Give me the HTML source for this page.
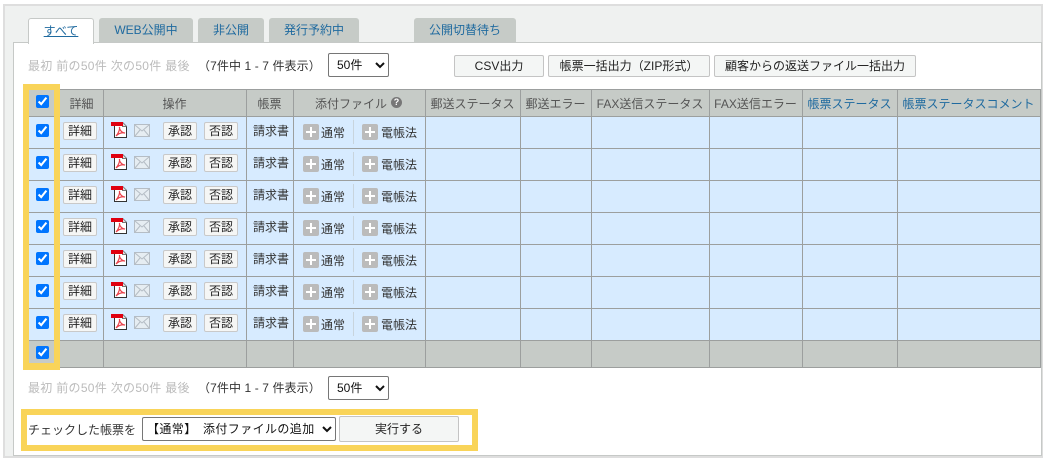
<!DOCTYPE html>
<html lang="ja"><head><meta charset="utf-8"><title>帳票</title>
<style>
html,body{margin:0;padding:0;width:1047px;height:462px;overflow:hidden;background:#fff}
body{position:relative;font:12px/16px "Liberation Sans","Noto Sans CJK JP",sans-serif;color:#333}
.a,.t,.b,.l,.r,.r *{position:absolute}
.a{white-space:nowrap}
#outer{left:3px;top:4px;width:1036px;height:450px;background:#eff1f0;border:2px solid #dedede}
#panel{left:13px;top:42px;width:1027px;height:412px;background:#fff;border:1px solid #c6c9c7}
.t{top:18px;height:24px;background:#c6cbc7;border-radius:3px 3px 0 0;text-align:center;line-height:24px;color:#1f6a9f;white-space:nowrap}
.b{background:#f4f6f5;border:1px solid #c4c4c4;border-radius:2px;box-sizing:border-box;text-align:center;color:#222;white-space:nowrap}
select{position:absolute;box-sizing:border-box;background:#fff;border:1px solid #767676;border-radius:2px;font:12px "Liberation Sans","Noto Sans CJK JP",sans-serif;color:#111;margin:0;padding:0 0 0 4px}
input{position:absolute;margin:0;width:13px;height:13px;accent-color:#0075ff}
.l{background:#9c9f9e}
.h{background:#c6cbc7}
.g{color:#bbb;letter-spacing:.3px}
.th{position:absolute;top:96px;text-align:center;color:#555;white-space:nowrap}
.bl{color:#1f6a9f}
.r{left:0;width:1047px;height:32px}
.r .k{left:36px;top:8px}
.r .b{height:18px;line-height:16px;background:#f5f6f5;top:6px;border-color:#c9c9c9}
.r .s{white-space:nowrap;color:#333}
.r svg{display:block}
.p{width:16px;height:16px;top:8px;background:#bbb;border-radius:2px}
.p::before{content:"";position:absolute;left:3px;top:7px;width:10px;height:2px;background:#fff}
.p::after{content:"";position:absolute;left:7px;top:3px;width:2px;height:10px;background:#fff}
.sep{left:353px;top:4px;width:1px;height:24px;background:#c8d4dd}
</style></head><body>
<svg width="0" height="0" style="position:absolute"><defs>
<symbol id="pdf" viewBox="0 0 17 16"><path d="M4.5 .5H12.5L16.5 4.5V15.5H4.5Z" fill="#fff" stroke="#333"/><path d="M12.5 .5V4.5H16.5" fill="#ddd" stroke="#777"/><rect x="1" y="0" width="12" height="4" fill="#e00010"/><path d="M6 14C8.5 11.5 10 7 9.5 5C9 7.5 12 11 15 11C12 10.2 8.5 11.5 6 14Z" fill="none" stroke="#e8404a" stroke-width="1.2"/></symbol>
<symbol id="mail" viewBox="0 0 16 13"><rect x=".5" y=".5" width="15" height="12" fill="#e6edf2" stroke="#b5bdc5"/><path d="M1 1L8 7L15 1M1 12L6 6M15 12L10 6" fill="none" stroke="#b5bdc5"/></symbol>
</defs></svg>

<div class="a" id="outer"></div>
<div class="a" id="panel"></div>

<div class="a" style="left:28px;top:18px;width:64px;height:25px;background:#fff;border:1px solid #c6c9c7;border-bottom:0;border-radius:3px 3px 0 0;text-align:center;line-height:24px;color:#1f6a9f"><span style="text-decoration:underline">すべて</span></div>
<div class="t" style="left:99px;width:94px">WEB公開中</div>
<div class="t" style="left:198px;width:66px">非公開</div>
<div class="t" style="left:269px;width:90px">発行予約中</div>
<div class="t" style="left:414px;width:102px">公開切替待ち</div>

<div class="a g" style="left:28px;top:58px">最初 前の50件 次の50件 最後</div>
<div class="a" style="left:198px;top:58px;letter-spacing:.1px">（7件中 1 - 7 件表示）</div>
<select style="left:328px;top:53px;width:61px;height:24px"><option>50件</option></select>

<div class="b" style="left:454px;top:55px;width:90px;height:22px;line-height:20px">CSV出力</div>
<div class="b" style="left:548px;top:55px;width:162px;height:22px;line-height:20px">帳票一括出力（ZIP形式）</div>
<div class="b" style="left:714px;top:55px;width:202px;height:22px;line-height:20px">顧客からの返送ファイル一括出力</div>

<!-- table -->
<div class="a h" style="left:29px;top:89px;width:1011px;height:27px"></div>
<div class="a" style="left:29px;top:116px;width:1011px;height:224px;background:#d7ebff"></div>
<div class="a h" style="left:29px;top:340px;width:1011px;height:27px"></div>

<div class="a th" style="left:60px;width:43px">詳細</div>
<div class="a th" style="left:103px;width:143px">操作</div>
<div class="a th" style="left:246px;width:47px">帳票</div>
<div class="a th" style="left:315px;top:96px;text-align:left">添付ファイル</div>
<div class="a" style="left:391px;top:97px;width:11px;height:11px;border-radius:50%;background:#777;color:#fff;font-size:9px;line-height:11px;text-align:center;font-weight:bold">?</div>
<div class="a th" style="left:425px;width:95px">郵送ステータス</div>
<div class="a th" style="left:520px;width:71px">郵送エラー</div>
<div class="a th" style="left:591px;width:118px">FAX送信ステータス</div>
<div class="a th" style="left:709px;width:93px">FAX送信エラー</div>
<div class="a th bl" style="left:802px;width:95px">帳票ステータス</div>
<div class="a th bl" style="left:897px;width:143px">帳票ステータスコメント</div>

<div class="r" style="top:116px"><input class="k" type="checkbox" checked><div class="b" style="left:63px;width:34px">詳細</div><svg style="left:110px;top:6px" width="17" height="16"><use href="#pdf"/></svg><svg style="left:134px;top:8px" width="16" height="13"><use href="#mail"/></svg><div class="b" style="left:163px;width:34px">承認</div><div class="b" style="left:204px;width:34px">否認</div><div class="s" style="left:253px;top:7px">請求書</div><div class="p" style="left:303px"></div><div class="s" style="left:321px;top:9px">通常</div><div class="sep"></div><div class="p" style="left:362px"></div><div class="s" style="left:381px;top:9px">電帳法</div></div>
<div class="r" style="top:148px"><input class="k" type="checkbox" checked><div class="b" style="left:63px;width:34px">詳細</div><svg style="left:110px;top:6px" width="17" height="16"><use href="#pdf"/></svg><svg style="left:134px;top:8px" width="16" height="13"><use href="#mail"/></svg><div class="b" style="left:163px;width:34px">承認</div><div class="b" style="left:204px;width:34px">否認</div><div class="s" style="left:253px;top:7px">請求書</div><div class="p" style="left:303px"></div><div class="s" style="left:321px;top:9px">通常</div><div class="sep"></div><div class="p" style="left:362px"></div><div class="s" style="left:381px;top:9px">電帳法</div></div>
<div class="r" style="top:180px"><input class="k" type="checkbox" checked><div class="b" style="left:63px;width:34px">詳細</div><svg style="left:110px;top:6px" width="17" height="16"><use href="#pdf"/></svg><svg style="left:134px;top:8px" width="16" height="13"><use href="#mail"/></svg><div class="b" style="left:163px;width:34px">承認</div><div class="b" style="left:204px;width:34px">否認</div><div class="s" style="left:253px;top:7px">請求書</div><div class="p" style="left:303px"></div><div class="s" style="left:321px;top:9px">通常</div><div class="sep"></div><div class="p" style="left:362px"></div><div class="s" style="left:381px;top:9px">電帳法</div></div>
<div class="r" style="top:212px"><input class="k" type="checkbox" checked><div class="b" style="left:63px;width:34px">詳細</div><svg style="left:110px;top:6px" width="17" height="16"><use href="#pdf"/></svg><svg style="left:134px;top:8px" width="16" height="13"><use href="#mail"/></svg><div class="b" style="left:163px;width:34px">承認</div><div class="b" style="left:204px;width:34px">否認</div><div class="s" style="left:253px;top:7px">請求書</div><div class="p" style="left:303px"></div><div class="s" style="left:321px;top:9px">通常</div><div class="sep"></div><div class="p" style="left:362px"></div><div class="s" style="left:381px;top:9px">電帳法</div></div>
<div class="r" style="top:244px"><input class="k" type="checkbox" checked><div class="b" style="left:63px;width:34px">詳細</div><svg style="left:110px;top:6px" width="17" height="16"><use href="#pdf"/></svg><svg style="left:134px;top:8px" width="16" height="13"><use href="#mail"/></svg><div class="b" style="left:163px;width:34px">承認</div><div class="b" style="left:204px;width:34px">否認</div><div class="s" style="left:253px;top:7px">請求書</div><div class="p" style="left:303px"></div><div class="s" style="left:321px;top:9px">通常</div><div class="sep"></div><div class="p" style="left:362px"></div><div class="s" style="left:381px;top:9px">電帳法</div></div>
<div class="r" style="top:276px"><input class="k" type="checkbox" checked><div class="b" style="left:63px;width:34px">詳細</div><svg style="left:110px;top:6px" width="17" height="16"><use href="#pdf"/></svg><svg style="left:134px;top:8px" width="16" height="13"><use href="#mail"/></svg><div class="b" style="left:163px;width:34px">承認</div><div class="b" style="left:204px;width:34px">否認</div><div class="s" style="left:253px;top:7px">請求書</div><div class="p" style="left:303px"></div><div class="s" style="left:321px;top:9px">通常</div><div class="sep"></div><div class="p" style="left:362px"></div><div class="s" style="left:381px;top:9px">電帳法</div></div>
<div class="r" style="top:308px"><input class="k" type="checkbox" checked><div class="b" style="left:63px;width:34px">詳細</div><svg style="left:110px;top:6px" width="17" height="16"><use href="#pdf"/></svg><svg style="left:134px;top:8px" width="16" height="13"><use href="#mail"/></svg><div class="b" style="left:163px;width:34px">承認</div><div class="b" style="left:204px;width:34px">否認</div><div class="s" style="left:253px;top:7px">請求書</div><div class="p" style="left:303px"></div><div class="s" style="left:321px;top:9px">通常</div><div class="sep"></div><div class="p" style="left:362px"></div><div class="s" style="left:381px;top:9px">電帳法</div></div>

<!-- grid lines -->
<div class="l" style="left:29px;top:89px;width:1012px;height:1px"></div>
<div class="l" style="left:29px;top:116px;width:1012px;height:1px"></div>
<div class="l" style="left:29px;top:148px;width:1012px;height:1px"></div>
<div class="l" style="left:29px;top:180px;width:1012px;height:1px"></div>
<div class="l" style="left:29px;top:212px;width:1012px;height:1px"></div>
<div class="l" style="left:29px;top:244px;width:1012px;height:1px"></div>
<div class="l" style="left:29px;top:276px;width:1012px;height:1px"></div>
<div class="l" style="left:29px;top:308px;width:1012px;height:1px"></div>
<div class="l" style="left:29px;top:340px;width:1012px;height:1px"></div>
<div class="l" style="left:29px;top:367px;width:1012px;height:1px"></div>
<div class="l" style="left:103px;top:89px;width:1px;height:279px"></div>
<div class="l" style="left:246px;top:89px;width:1px;height:279px"></div>
<div class="l" style="left:293px;top:89px;width:1px;height:279px"></div>
<div class="l" style="left:425px;top:89px;width:1px;height:279px"></div>
<div class="l" style="left:520px;top:89px;width:1px;height:279px"></div>
<div class="l" style="left:591px;top:89px;width:1px;height:279px"></div>
<div class="l" style="left:709px;top:89px;width:1px;height:279px"></div>
<div class="l" style="left:802px;top:89px;width:1px;height:279px"></div>
<div class="l" style="left:897px;top:89px;width:1px;height:279px"></div>
<div class="l" style="left:1040px;top:89px;width:1px;height:279px"></div>

<input type="checkbox" checked style="left:36px;top:95px">
<input type="checkbox" checked style="left:36px;top:346px">

<div class="a" style="left:23px;top:84px;width:25px;height:273px;border:6px solid #f9d459;border-bottom-width:7px"></div>

<div class="a g" style="left:28px;top:380px">最初 前の50件 次の50件 最後</div>
<div class="a" style="left:198px;top:380px;letter-spacing:.1px">（7件中 1 - 7 件表示）</div>
<select style="left:328px;top:376px;width:61px;height:24px"><option>50件</option></select>

<div class="a" style="left:21px;top:409px;width:445px;height:30px;border:6px solid #f9d459"></div>
<div class="a" style="left:28px;top:422px">チェックした帳票を</div>
<select style="left:142px;top:417px;width:194px;height:24px;padding-left:0;letter-spacing:.4px"><option>【通常】　添付ファイルの追加</option></select>
<div class="b" style="left:339px;top:416px;width:120px;height:26px;line-height:24px">実行する</div>
</body></html>
